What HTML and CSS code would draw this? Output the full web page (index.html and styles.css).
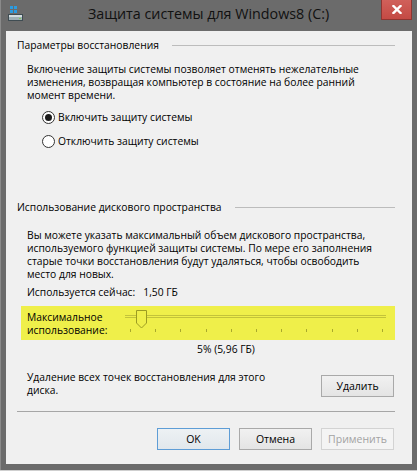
FILE: index.html
```html
<!DOCTYPE html>
<html lang="ru">
<head>
    <meta charset="UTF-8">
    <meta name="viewport" content="width=device-width, initial-scale=1.0">
    <title>Защита системы для Windows8 (C:)</title>
    <link rel="stylesheet" href="styles.css">
</head>
<body>
    <div class="window">
        <div class="titlebar">
            <svg class="app-icon" width="16" height="16" viewBox="0 0 16 16">
                <rect x="2" y="0" width="3" height="3" fill="#2b9be0"/>
                <rect x="6" y="0" width="3" height="3" fill="#2b9be0"/>
                <rect x="2" y="4" width="3" height="3" fill="#2b9be0"/>
                <rect x="6" y="4" width="3" height="3" fill="#2b9be0"/>
                <rect x="0.5" y="8.5" width="14" height="6" fill="#9fb0b6" stroke="#3f4c52"/>
                <rect x="1" y="9" width="13" height="2" fill="#d3dde0"/>
                <rect x="11" y="12" width="2" height="1" fill="#7ed04f"/>
            </svg>
            <span class="title">Защита системы для Windows8 (C:)</span>
            <button class="close">
                <svg width="10" height="9" viewBox="0 0 10 9">
                    <path d="M1.5 1 L8.5 8 M8.5 1 L1.5 8" stroke="#fff" stroke-width="2.4" stroke-linecap="square"/>
                </svg>
            </button>
        </div>

        <div class="content">
            <div class="group-title">
                <span>Параметры восстановления</span>
                <i class="rule"></i>
            </div>
            <p class="text first">Включение защиты системы позволяет отменять нежелательные<br>изменения, возвращая компьютер в состояние на более ранний<br>момент времени.</p>

            <label class="radio first"><span class="dot checked"></span>Включить защиту системы</label>
            <label class="radio"><span class="dot"></span>Отключить защиту системы</label>

            <div class="group-title second">
                <span>Использование дискового пространства</span>
                <i class="rule"></i>
            </div>
            <p class="text second">Вы можете указать максимальный объем дискового пространства,<br>используемого функцией защиты системы. По мере его заполнения<br>старые точки восстановления будут удаляться, чтобы освободить<br>место для новых.</p>

            <p class="usage">Используется сейчас:&nbsp;&nbsp; 1,50 ГБ</p>

            <div class="highlight">
                <div class="max-label">Максимальное<br>использование:</div>
                <div class="slider">
                    <div class="track"></div>
                    <div class="ticks">
                        <i></i><i></i><i></i><i></i><i></i><i></i><i></i><i></i><i></i><i></i><i></i>
                    </div>
                    <svg class="thumb" width="11" height="19" viewBox="0 0 11 19">
                        <path d="M0.5 0.5 H10.5 V13 L5.5 18 L0.5 13 Z" fill="#efef4a" stroke="#9c9c22"/>
                    </svg>
                </div>
            </div>

            <p class="percent">5% (5,96 ГБ)</p>

            <div class="delete-row">
                <p>Удаление всех точек восстановления для этого<br>диска.</p>
                <button class="btn">Удалить</button>
            </div>

            <div class="separator"></div>

            <div class="actions">
                <button class="btn default">OK</button>
                <button class="btn">Отмена</button>
                <button class="btn" disabled>Применить</button>
            </div>
        </div>
    </div>
</body>
</html>
```

FILE: styles.css
```css
body {
    margin: 0;
    background-color: #cfcfcf;
    font-family: 'Segoe UI', 'Open Sans', sans-serif;
}
p {
    margin: 0;
}
.window {
    width: 417px;
    height: 470px;
    background-color: #6b6b6b;
    box-shadow: inset 1px 0 #8a8a8a;
    display: flex;
    flex-direction: column;
}
.titlebar {
    height: 31px;
    display: grid;
    grid-template-columns: 1fr auto 1fr;
    align-items: start;
}
.app-icon {
    margin: 6px 0 0 8px;
}
.title {
    font-size: 14.3px;
    line-height: 16px;
    margin-top: 6px;
    color: #111;
}
.close {
    justify-self: end;
    margin-right: 5px;
    width: 31px;
    height: 20px;
    padding: 0;
    background: linear-gradient(#d0605a, #c44a44);
    border: 1px solid #8e3531;
    border-top: none;
    display: flex;
    align-items: center;
    justify-content: center;
}
.content {
    flex: 1;
    margin: 0 5px 6px 6px;
    background-color: #f0f0f0;
    padding: 8px 17px 0 11px;
    font-size: 10.3px;
    line-height: 13px;
    color: #000;
    white-space: nowrap;
}
.group-title {
    display: flex;
    align-items: center;
    gap: 13px;
}
.group-title .rule {
    flex: 1;
    height: 1px;
    background-color: #bcbcbc;
}
.group-title.second {
    margin-top: 53px;
}
.text {
    margin-left: 10px;
}
.text.first {
    margin-top: 11px;
}
.text.second {
    margin-top: 15px;
}
.radio {
    display: flex;
    align-items: center;
    gap: 3px;
    height: 14px;
    margin: 10px 0 0 25px;
}
.radio.first {
    margin-top: 8px;
}
.dot {
    width: 13px;
    height: 13px;
    box-sizing: border-box;
    border: 1px solid #333;
    border-radius: 50%;
    background-color: #fff;
    display: flex;
    align-items: center;
    justify-content: center;
}
.dot.checked::after {
    content: '';
    width: 7px;
    height: 7px;
    border-radius: 50%;
    background-color: #1c1c1c;
}
.usage {
    margin: 5px 0 0 10px;
}
.highlight {
    margin: 7px 0 0 4px;
    height: 34px;
    box-sizing: border-box;
    padding: 5px 0 0 6px;
    background-color: #efef4a;
    display: flex;
}
.max-label {
    width: 98px;
}
.slider {
    position: relative;
    width: 261px;
    height: 26px;
    margin-top: -1px;
}
.track {
    margin-top: 5px;
    height: 1px;
    border-top: 1px solid #c3c33a;
    border-bottom: 1px solid #c3c33a;
}
.ticks {
    display: flex;
    justify-content: space-between;
    padding: 0 3px 0 5px;
    margin-top: 11px;
}
.ticks i {
    width: 1px;
    height: 3px;
    background-color: #a9a92c;
}
.thumb {
    position: absolute;
    top: 0;
    left: 11px;
}
.percent {
    margin: 3px 0 0 40px;
    text-align: center;
}
.delete-row {
    display: flex;
    align-items: center;
    justify-content: space-between;
    margin: 15px 1px 0 10px;
}
.btn {
    width: 73px;
    height: 22px;
    padding: 0;
    font-family: inherit;
    font-size: 10.5px;
    color: #000;
    border: 1px solid #a9a9a9;
    background: linear-gradient(#f1f1f1, #e4e4e4);
}
.btn.default {
    border-color: #5e9dd6;
    background: linear-gradient(#edf1f4, #e1e7ec);
}
.btn:disabled {
    color: #a3a3a3;
    border-color: #d3d3d3;
    background: #f4f4f4;
}
.delete-row .btn {
    margin-top: 4px;
}
.separator {
    margin-top: 14px;
    height: 1px;
    background-color: #a6a6a6;
}
.actions {
    display: flex;
    justify-content: flex-end;
    gap: 9px;
    margin: 16px 1px 0 0;
}
```
